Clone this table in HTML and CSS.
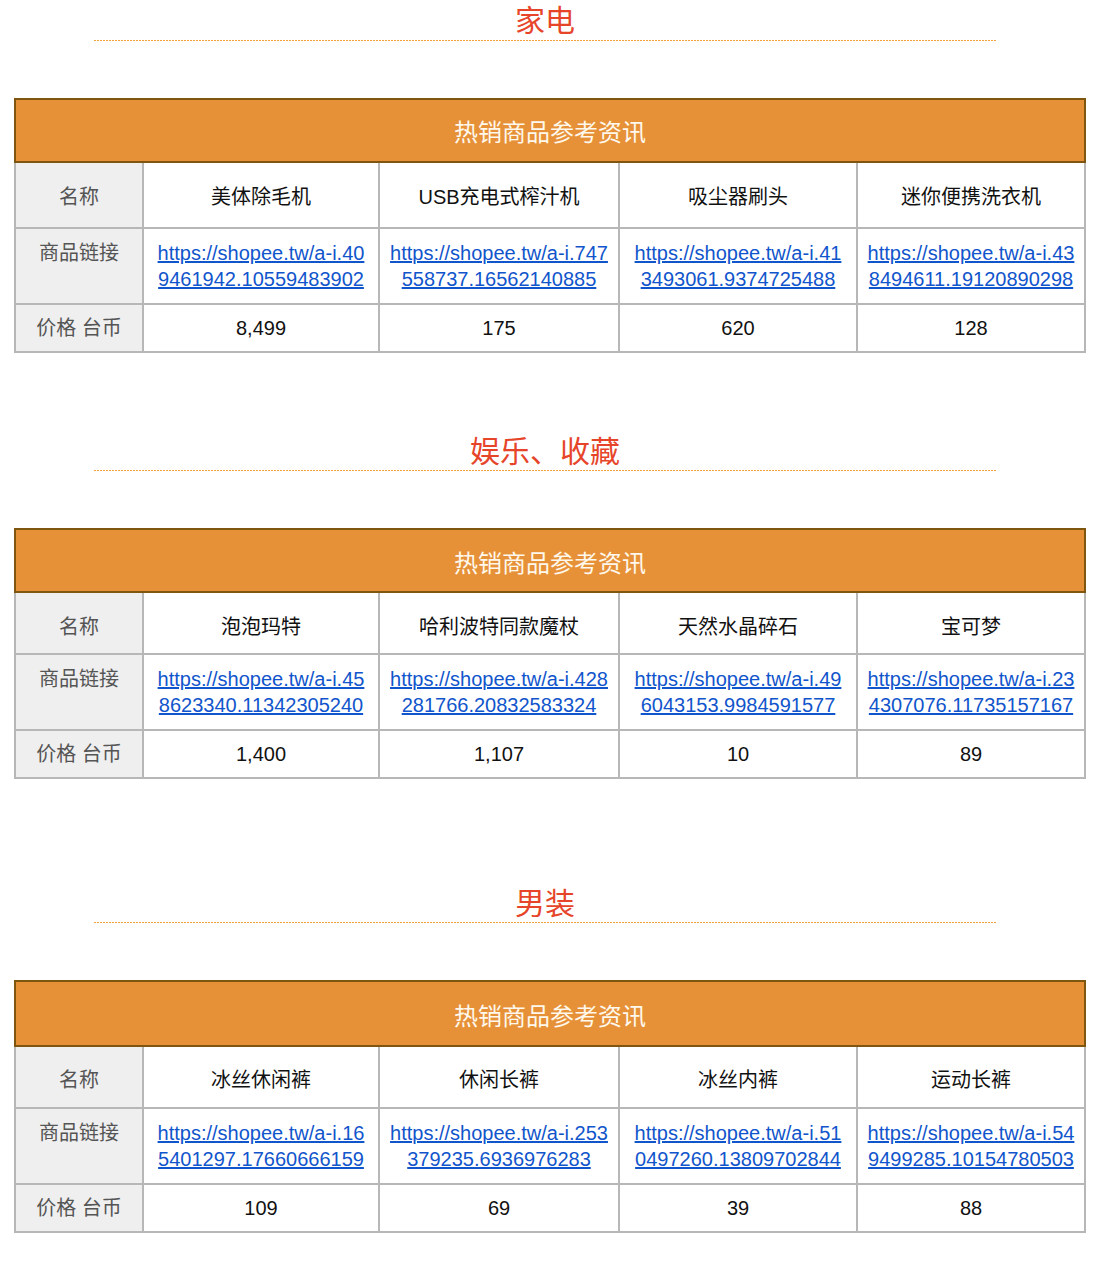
FILE: index.html
```html
<!DOCTYPE html>
<html lang="zh-CN">
<head>
<meta charset="utf-8">
<title>热销商品参考资讯</title>
<link rel="stylesheet" href="styles.css">
</head>
<body>
<section class="section s1">
  <h2 class="section-title">家电</h2>
  <table class="info t1">
    <colgroup><col class="c0"><col class="c1"><col class="c2"><col class="c3"><col class="c4"></colgroup>
    <tr class="head"><td colspan="5">热销商品参考资讯</td></tr>
    <tr class="name"><td class="label">名称</td><td>美体除毛机</td><td>USB充电式榨汁机</td><td>吸尘器刷头</td><td>迷你便携洗衣机</td></tr>
    <tr class="link"><td class="label">商品链接</td>
      <td><a href="#">https://shopee.tw/a-i.40<br>9461942.10559483902</a></td>
      <td><a href="#">https://shopee.tw/a-i.747<br>558737.16562140885</a></td>
      <td><a href="#">https://shopee.tw/a-i.41<br>3493061.9374725488</a></td>
      <td><a href="#">https://shopee.tw/a-i.43<br>8494611.19120890298</a></td></tr>
    <tr class="price"><td class="label">价格 台币</td><td>8,499</td><td>175</td><td>620</td><td>128</td></tr>
  </table>
</section>
<section class="section s2">
  <h2 class="section-title">娱乐、收藏</h2>
  <table class="info t2">
    <colgroup><col class="c0"><col class="c1"><col class="c2"><col class="c3"><col class="c4"></colgroup>
    <tr class="head"><td colspan="5">热销商品参考资讯</td></tr>
    <tr class="name"><td class="label">名称</td><td>泡泡玛特</td><td>哈利波特同款魔杖</td><td>天然水晶碎石</td><td>宝可梦</td></tr>
    <tr class="link"><td class="label">商品链接</td>
      <td><a href="#">https://shopee.tw/a-i.45<br>8623340.11342305240</a></td>
      <td><a href="#">https://shopee.tw/a-i.428<br>281766.20832583324</a></td>
      <td><a href="#">https://shopee.tw/a-i.49<br>6043153.9984591577</a></td>
      <td><a href="#">https://shopee.tw/a-i.23<br>4307076.11735157167</a></td></tr>
    <tr class="price"><td class="label">价格 台币</td><td>1,400</td><td>1,107</td><td>10</td><td>89</td></tr>
  </table>
</section>
<section class="section s3">
  <h2 class="section-title">男装</h2>
  <table class="info t3">
    <colgroup><col class="c0"><col class="c1"><col class="c2"><col class="c3"><col class="c4"></colgroup>
    <tr class="head"><td colspan="5">热销商品参考资讯</td></tr>
    <tr class="name"><td class="label">名称</td><td>冰丝休闲裤</td><td>休闲长裤</td><td>冰丝内裤</td><td>运动长裤</td></tr>
    <tr class="link"><td class="label">商品链接</td>
      <td><a href="#">https://shopee.tw/a-i.16<br>5401297.17660666159</a></td>
      <td><a href="#">https://shopee.tw/a-i.253<br>379235.6936976283</a></td>
      <td><a href="#">https://shopee.tw/a-i.51<br>0497260.13809702844</a></td>
      <td><a href="#">https://shopee.tw/a-i.54<br>9499285.10154780503</a></td></tr>
    <tr class="price"><td class="label">价格 台币</td><td>109</td><td>69</td><td>39</td><td>88</td></tr>
  </table>
</section>
</body>
</html>
```
FILE: styles.css
```css
html, body {
  margin: 0;
  padding: 0;
  background: #ffffff;
}
body {
  font-family: "Liberation Sans", Arial, "Noto Sans CJK SC", sans-serif;
  color: #000;
}
.section-title {
  width: 902px;
  margin: 0 0 0 94px;
  padding: 2px 0 1px;
  text-align: center;
  font-size: 30px;
  line-height: 38px;
  font-weight: normal;
  color: #e6452a;
  background-image: repeating-linear-gradient(to right, #f2a03a 0, #f2a03a 2px, transparent 2px, transparent 3px);
  background-size: 100% 1px;
  background-position: left bottom;
  background-repeat: no-repeat;
}
.s2 .section-title,
.s3 .section-title {
  padding-top: 4px;
  line-height: 36px;
}
.s2 { margin-top: 77px; }
.s3 { margin-top: 103px; }
.info {
  margin: 57px 0 0 14px;
  width: 1070px;
  table-layout: fixed;
  border-collapse: collapse;
  font-size: 20px;
  line-height: 26px;
}
.c0 { width: 128px; }
.c1 { width: 236px; }
.c2 { width: 240px; }
.c3 { width: 238px; }
.c4 { width: 228px; }
.info td {
  border: 2px solid #b7b7b7;
  text-align: center;
  vertical-align: top;
  padding: 10px 6px;
  color: #111;
}
.info .head td {
  background: #e69138;
  border: 2px solid #7f5610;
  color: #fff8ec;
  font-size: 24px;
  line-height: 56px;
  padding: 5px 0 0;
}
.t2 .head td {
  line-height: 54px;
  padding-top: 7px;
}
.t3 .head td {
  line-height: 56px;
  padding-top: 7px;
}
.info td.label {
  background: #efefef;
  color: #555;
}
.t1 .name td { padding-top: 21px; padding-bottom: 17px; }
.t2 .name td { padding-top: 21px; padding-bottom: 13px; }
.t3 .name td { padding-top: 20px; padding-bottom: 14px; }
.info .link td { padding-top: 11px; padding-bottom: 11px; }
.info .price td { padding-top: 10px; padding-bottom: 10px; }
.info a {
  color: #1155cc;
  text-decoration: underline;
}
```
